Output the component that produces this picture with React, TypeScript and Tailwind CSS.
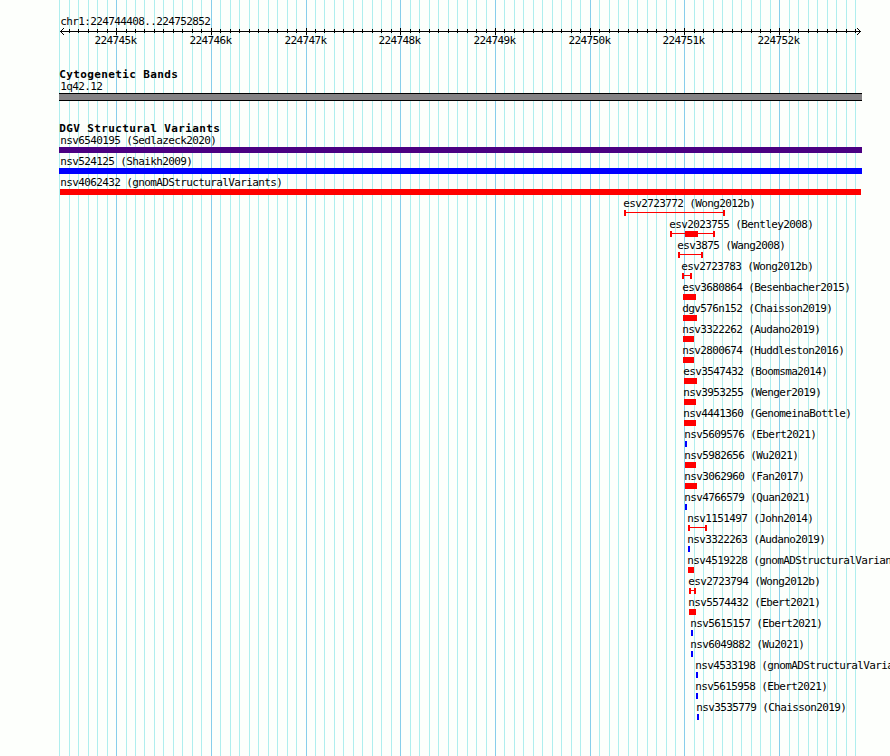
type Glyph = "box" | "span";

interface Feature {
  label: string;
  start: number;
  end: number;
  color: string;
  glyph?: Glyph;
  core?: [number, number];
}

const REGION_START = 224744408;
const PX_PER_BASE = 800 / 8445;
const RED = "bg-[#ff0000]";
const BLUE = "bg-[#0000ff]";

const toX = (pos: number) => Math.round(60 + (pos - REGION_START) * PX_PER_BASE);

const ticks = Array.from({ length: 85 }, (_, i) => {
  const pos = 224744400 + i * 100;
  return { pos, x: toX(pos), major: pos % 1000 === 0 };
});

const features: Feature[] = [
  { label: "nsv6540195 (Sedlazeck2020)", start: 59, end: 862, color: "bg-[#4b0082]" },
  { label: "nsv524125 (Shaikh2009)", start: 59, end: 862, color: BLUE },
  { label: "nsv4062432 (gnomADStructuralVariants)", start: 60, end: 861, color: RED },
  { label: "esv2723772 (Wong2012b)", start: 624, end: 725, color: RED, glyph: "span" },
  { label: "esv2023755 (Bentley2008)", start: 670, end: 715, color: RED, glyph: "span", core: [685, 698] },
  { label: "esv3875 (Wang2008)", start: 678, end: 703, color: RED, glyph: "span" },
  { label: "esv2723783 (Wong2012b)", start: 682, end: 692, color: RED, glyph: "span" },
  { label: "esv3680864 (Besenbacher2015)", start: 683, end: 696, color: RED },
  { label: "dgv576n152 (Chaisson2019)", start: 683, end: 697, color: RED },
  { label: "nsv3322262 (Audano2019)", start: 683, end: 694, color: RED },
  { label: "nsv2800674 (Huddleston2016)", start: 683, end: 694, color: RED },
  { label: "esv3547432 (Boomsma2014)", start: 684, end: 697, color: RED },
  { label: "nsv3953255 (Wenger2019)", start: 684, end: 696, color: RED },
  { label: "nsv4441360 (GenomeinaBottle)", start: 684, end: 696, color: RED },
  { label: "nsv5609576 (Ebert2021)", start: 685, end: 687, color: BLUE },
  { label: "nsv5982656 (Wu2021)", start: 685, end: 696, color: RED },
  { label: "nsv3062960 (Fan2017)", start: 685, end: 697, color: RED },
  { label: "nsv4766579 (Quan2021)", start: 685, end: 687, color: BLUE },
  { label: "nsv1151497 (John2014)", start: 688, end: 707, color: RED, glyph: "span" },
  { label: "nsv3322263 (Audano2019)", start: 688, end: 690, color: BLUE },
  { label: "nsv4519228 (gnomADStructuralVariants)", start: 688, end: 694, color: RED },
  { label: "esv2723794 (Wong2012b)", start: 689, end: 696, color: RED, glyph: "span" },
  { label: "nsv5574432 (Ebert2021)", start: 689, end: 696, color: RED },
  { label: "nsv5615157 (Ebert2021)", start: 691, end: 693, color: BLUE },
  { label: "nsv6049882 (Wu2021)", start: 691, end: 693, color: BLUE },
  { label: "nsv4533198 (gnomADStructuralVariants)", start: 696, end: 698, color: BLUE },
  { label: "nsv5615958 (Ebert2021)", start: 696, end: 698, color: BLUE },
  { label: "nsv3535779 (Chaisson2019)", start: 697, end: 699, color: BLUE },
];

function GridLines() {
  return (
    <svg className="absolute inset-0" width="890" height="756" shapeRendering="crispEdges">
      {ticks.map((t) => (
        <rect key={t.pos} x={t.x} y="0" width="1" height="756" fill={t.major ? "#87ceeb" : "#afeeee"} />
      ))}
    </svg>
  );
}

function Ruler() {
  return (
    <svg className="block h-[20px] w-[890px]" viewBox="0 27 890 20" shapeRendering="crispEdges">
      <rect x="60" y="31" width="801" height="1" />
      {[1, 2, 3].map((d) => (
        <g key={d}>
          <rect x={60 + d} y={31 - d} width="1" height="1" />
          <rect x={60 + d} y={31 + d} width="1" height="1" />
          <rect x={860 - d} y={31 - d} width="1" height="1" />
          <rect x={860 - d} y={31 + d} width="1" height="1" />
        </g>
      ))}
      {ticks
        .filter((t) => t.x > 60 && t.x < 856)
        .map((t) => (
          <rect key={t.pos} x={t.x} y={t.major ? 28 : 29} width="1" height={t.major ? 7 : 4} />
        ))}
      {ticks
        .filter((t) => t.major)
        .map((t) => (
          <text key={t.pos} x={t.x - 21.5} y="44">
            {t.pos / 1000}k
          </text>
        ))}
    </svg>
  );
}

function FeatureRow({ label, start, end, color, glyph = "box", core }: Feature) {
  return (
    <div className="h-[21px]">
      <div className="h-3 leading-3" style={{ marginLeft: Math.max(60.2, start - 0.8) }}>
        {label}
      </div>
      {glyph === "box" ? (
        <div className={`h-1.5 ${color}`} style={{ marginLeft: start, width: end - start }} />
      ) : (
        <div className="flex h-1.5" style={{ marginLeft: start, width: end - start }}>
          <div className={`w-0.5 ${color}`} />
          {core ? (
            <>
              <div className={`mt-0.5 h-px ${color}`} style={{ width: core[0] - start - 2 }} />
              <div className={color} style={{ width: core[1] - core[0] }} />
            </>
          ) : null}
          <div className={`mt-0.5 h-px flex-1 ${color}`} />
          <div className={`w-0.5 ${color}`} />
        </div>
      )}
    </div>
  );
}

export default function App() {
  return (
    <div className="relative h-[756px] w-[890px] overflow-hidden bg-[#fdfffc] font-['DejaVu_Sans_Mono',monospace] text-[11px] tracking-[-0.622px] whitespace-nowrap text-black">
      <GridLines />
      <main className="relative flex flex-col pt-4">
        <div className="ml-[60.2px] h-[11px] leading-3">chr1:224744408..224752852</div>
        <Ruler />
        <section className="pt-[22px]">
          <h2 className="ml-[59.3px] h-3 text-[11px] leading-3 font-bold tracking-[0.378px]">Cytogenetic Bands</h2>
          <div className="ml-[60.2px] h-3 leading-3">1q42.12</div>
          <div className="ml-[59px] h-2 w-[803px] border-y border-black bg-[#848284]" />
        </section>
        <section className="pt-[22px]">
          <h2 className="ml-[59.3px] h-3 text-[11px] leading-3 font-bold tracking-[0.378px]">
            DGV Structural Variants
          </h2>
          {features.map((f) => (
            <FeatureRow key={f.label} {...f} />
          ))}
        </section>
      </main>
    </div>
  );
}
